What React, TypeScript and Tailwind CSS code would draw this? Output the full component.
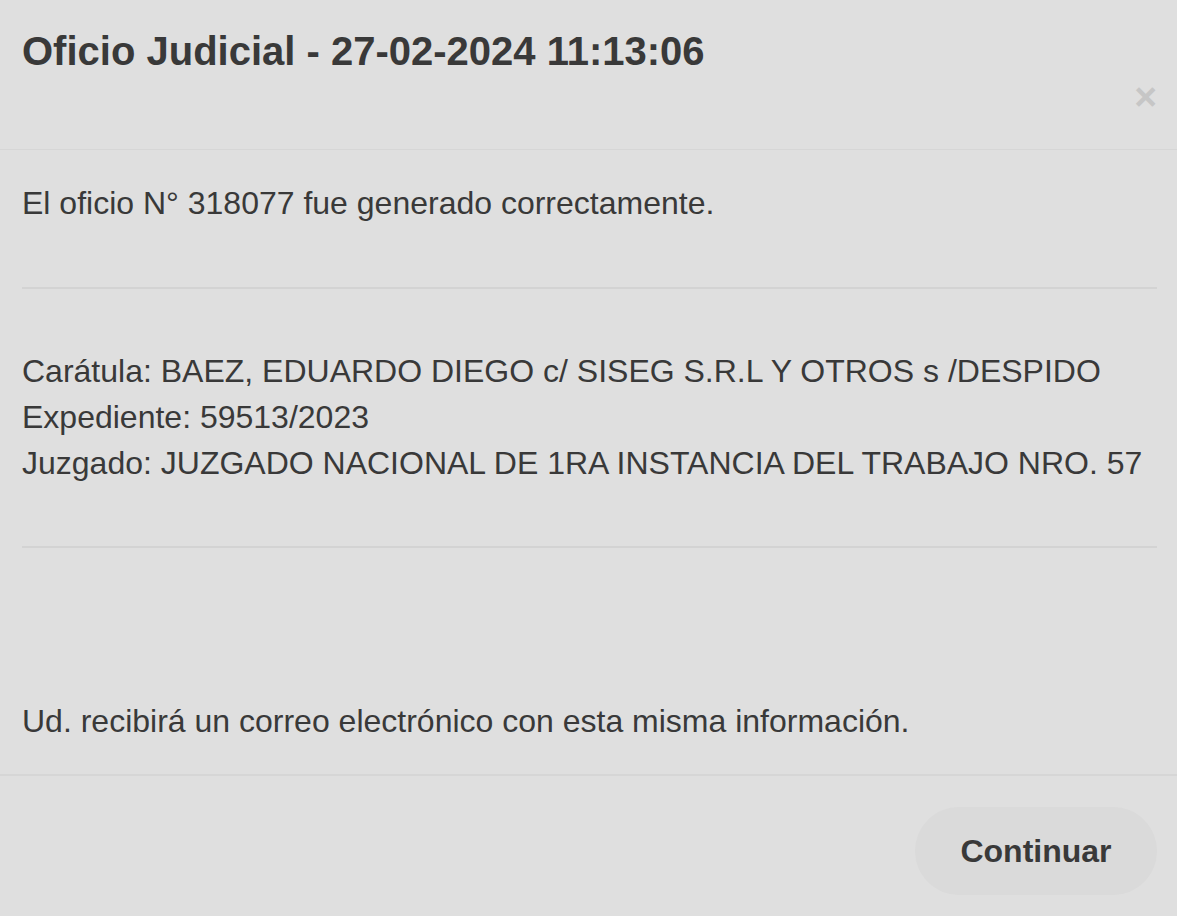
export default function App() {
  return (
    <div className="min-h-[916px] w-full bg-[#dfdfdf] text-[#393939] font-['Liberation_Sans',Arial,sans-serif]">
      <div className="flex flex-col border-b border-[#d6d6d6] pl-[22px] pr-[20px] pt-[29px] pb-[28px]">
        <h4 className="text-[40px] font-bold leading-[44px]">
          Oficio Judicial - 27-02-2024 11:13:06
        </h4>
        <button className="self-end h-[48px] text-[39px] font-bold leading-[48px] text-[#c6c6c6]">
          ×
        </button>
      </div>

      <div className="pl-[22px] pr-[20px] pt-[30px] pb-[30px] text-[32px] leading-[46px]">
        <p>El oficio N° 318077 fue generado correctamente.</p>
        <hr className="mt-[61px] mb-[59px] border-t-2 border-[#d3d3d3]" />
        <p>Carátula: BAEZ, EDUARDO DIEGO c/ SISEG S.R.L Y OTROS s /DESPIDO</p>
        <p>Expediente: 59513/2023</p>
        <p>Juzgado: JUZGADO NACIONAL DE 1RA INSTANCIA DEL TRABAJO NRO. 57</p>
        <hr className="mt-[60px] mb-[150px] border-t-2 border-[#d3d3d3]" />
        <p>Ud. recibirá un correo electrónico con esta misma información.</p>
      </div>

      <div className="flex justify-end border-t-2 border-[#d6d6d6] px-[20px] pt-[31px] pb-[20px]">
        <button className="h-[88px] w-[242px] rounded-full bg-[#dadada] text-[32px] font-bold text-[#393939]">
          Continuar
        </button>
      </div>
    </div>
  );
}
